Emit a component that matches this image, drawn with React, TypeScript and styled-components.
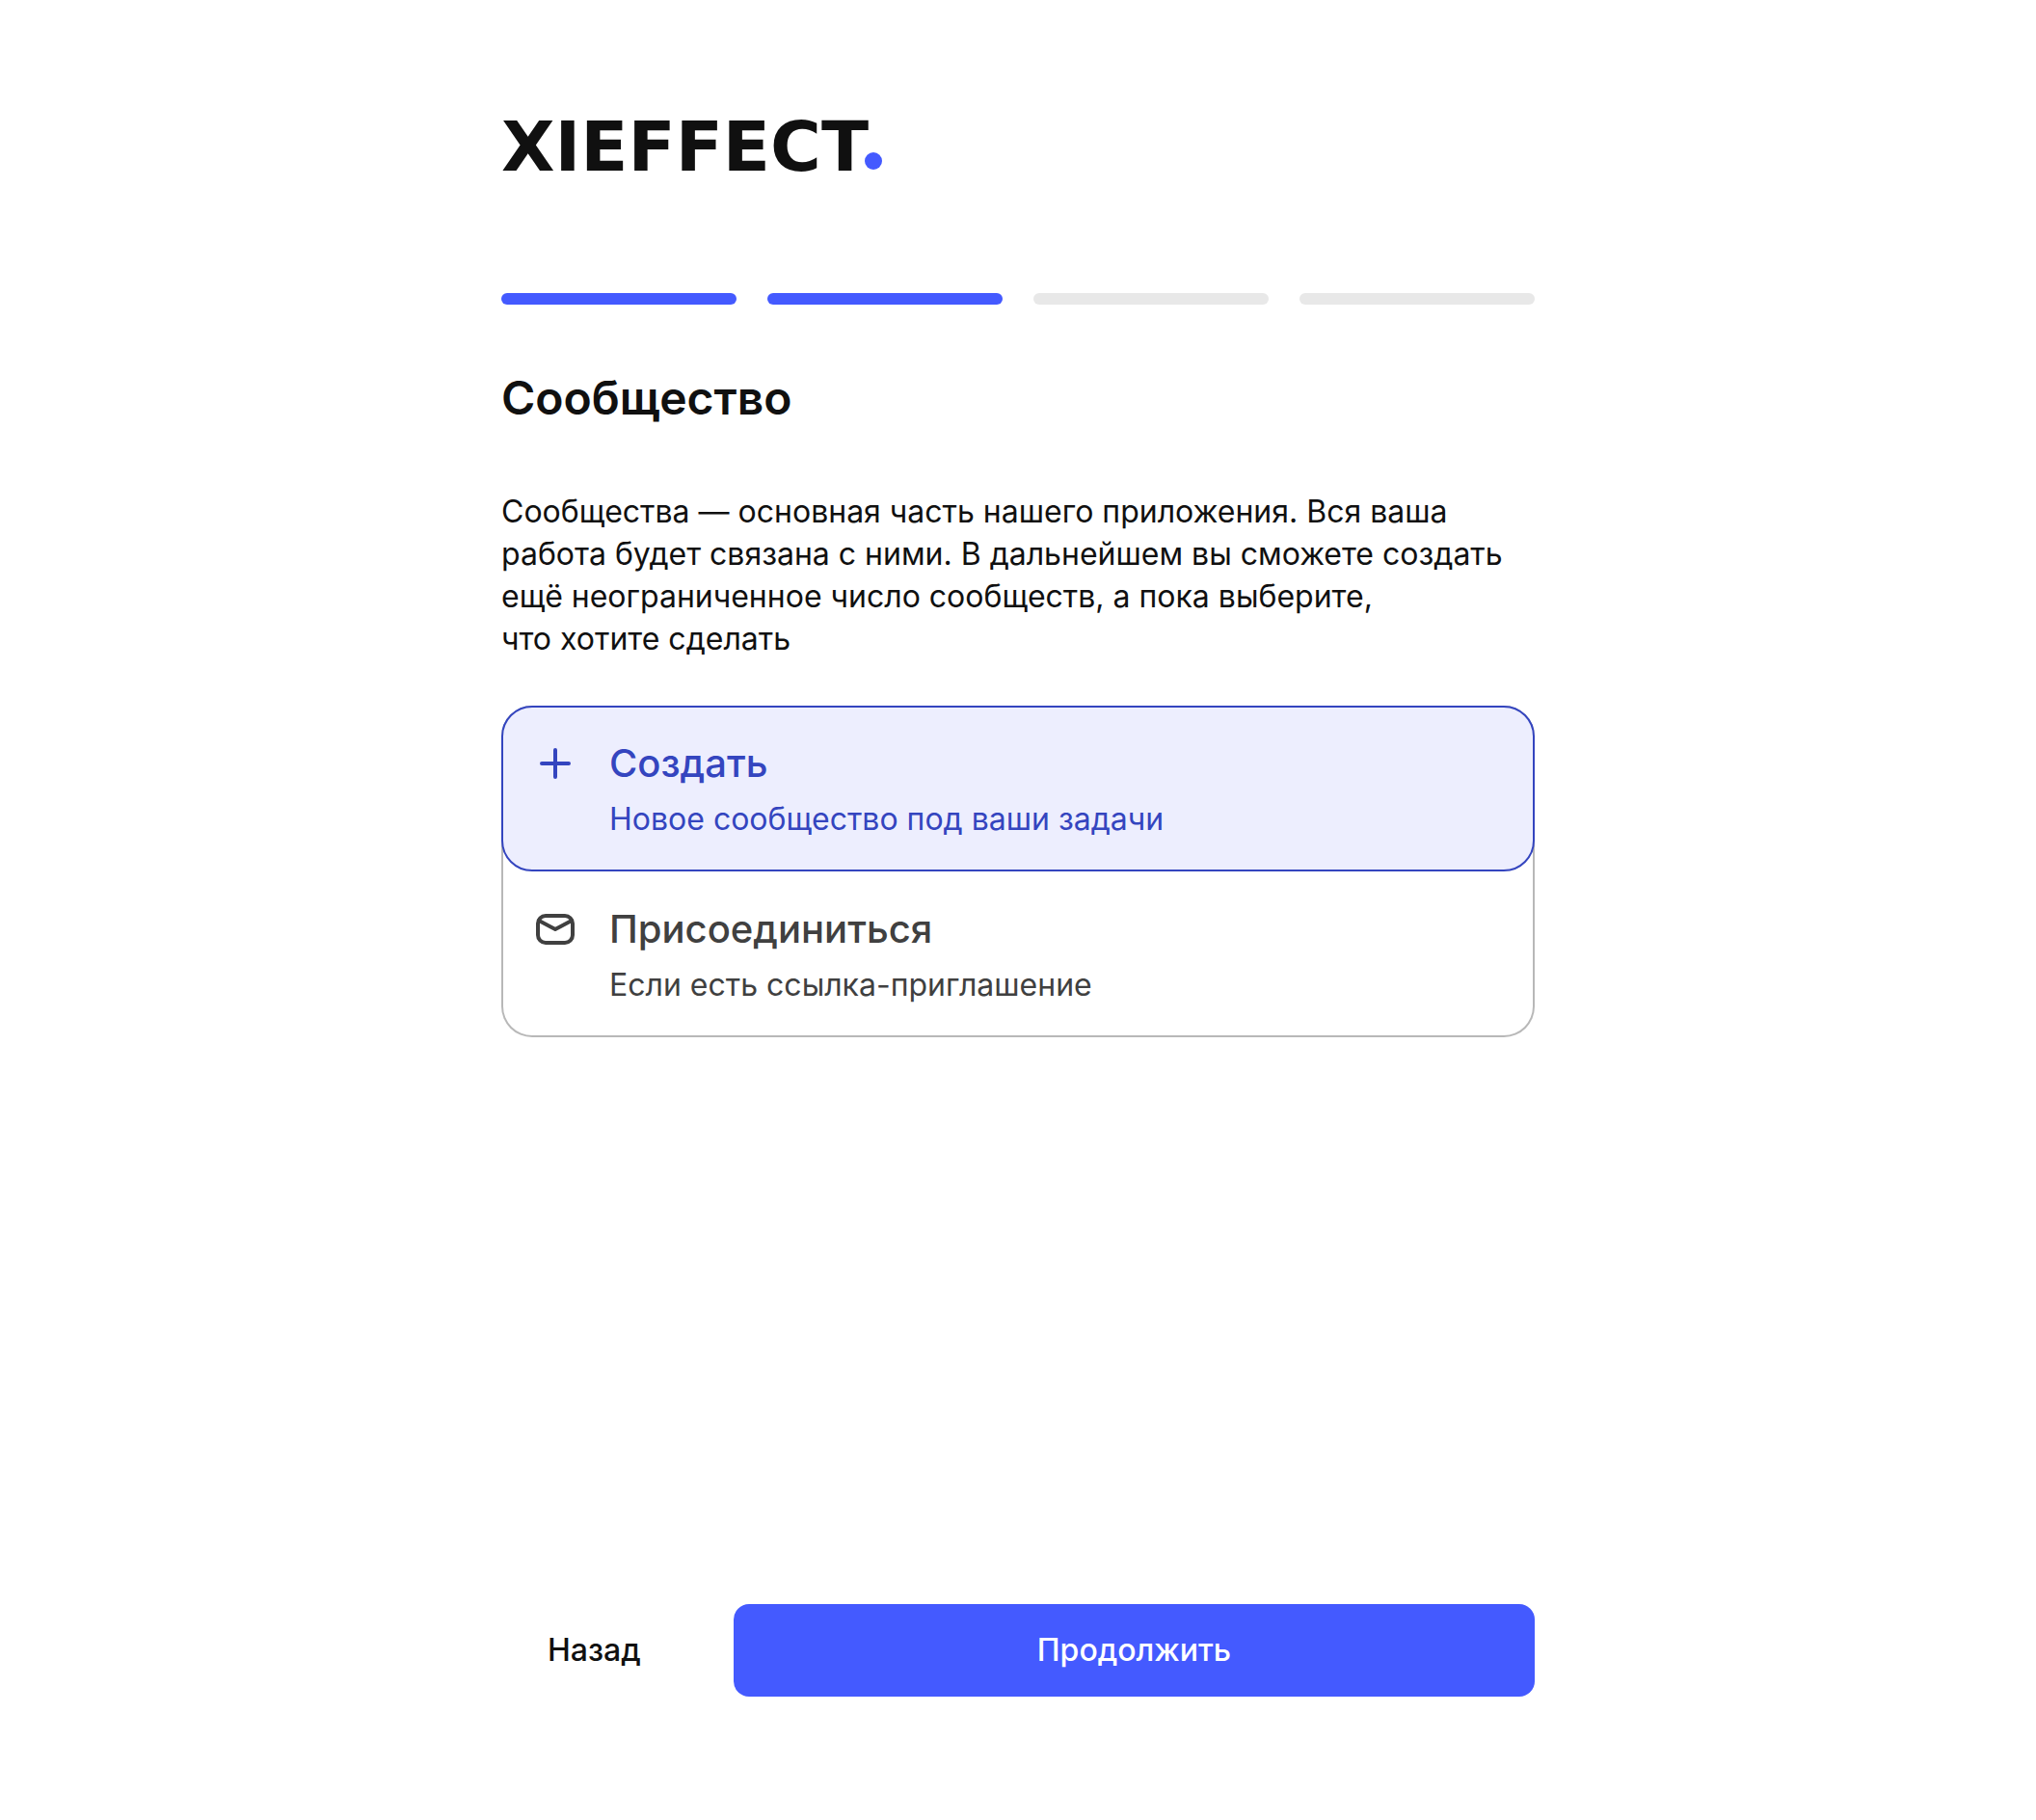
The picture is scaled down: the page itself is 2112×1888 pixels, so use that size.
import React, { useState } from "react";
import styled, { createGlobalStyle } from "styled-components";

const GlobalStyle = createGlobalStyle`
  *, *::before, *::after { box-sizing: border-box; }
  body { margin: 0; background: #ffffff; color: #101010; font-family: Inter, "Noto Sans", sans-serif; }
`;

const Page = styled.form`
  display: flex;
  flex-direction: column;
  width: 100%;
  max-width: 1136px;
  min-height: 100vh;
  margin: 0 auto;
  padding: 128px 32px;
`;

const Logo = styled.div`
  display: flex;
  align-items: flex-end;
  height: 48px;
  font-family: "DejaVu Sans", Inter, sans-serif;
  font-size: 72px;
  font-weight: 700;
  line-height: 48px;
`;

const LogoDot = styled.span`
  flex: none;
  width: 18px;
  height: 18px;
  margin-left: -4px;
  border-radius: 50%;
  background: #445aff;
`;

const Steps = styled.ol`
  display: grid;
  grid-template-columns: repeat(4, 1fr);
  gap: 32px;
  margin: 128px 0 0;
  padding: 0;
  list-style: none;
`;

const Step = styled.li<{ $done: boolean }>`
  height: 12px;
  border-radius: 6px;
  background: ${(p) => (p.$done ? "#445aff" : "#e8e8e8")};
`;

const Title = styled.h1`
  margin: 64px 0 0;
  font-size: 48px;
  font-weight: 600;
  line-height: 66px;
`;

const Intro = styled.p`
  margin: 63px 0 0;
  font-size: 32px;
  line-height: 44px;
`;

const Options = styled.fieldset`
  margin: 47px 0 48px;
  padding: 0;
  border: 0;
  border-radius: 32px;
  box-shadow: inset 0 0 0 2px #b8b8b8;
`;

const Option = styled.label`
  display: grid;
  grid-template-columns: 48px 1fr;
  column-gap: 32px;
  row-gap: 8px;
  align-items: center;
  padding: 30px;
  border: 2px solid transparent;
  border-radius: 32px;
  color: #404040;
  cursor: pointer;

  &:has(input:checked) {
    border-color: #3445bf;
    background: #edeefe;
    color: #3445bf;
  }
`;

const Radio = styled.input`
  position: absolute;
  width: 1px;
  height: 1px;
  margin: 0;
  opacity: 0;
`;

const Icon = styled.svg`
  display: block;
  width: 48px;
  height: 48px;
  fill: none;
  stroke: currentColor;
  stroke-width: 4;
  stroke-linecap: round;
  stroke-linejoin: round;
`;

const OptionTitle = styled.span`
  font-size: 40px;
  font-weight: 500;
  line-height: 56px;
`;

const OptionText = styled.span`
  grid-column: 2;
  font-size: 32px;
  line-height: 44px;
`;

const Actions = styled.div`
  display: flex;
  gap: 48px;
  margin-top: auto;
`;

const Button = styled.button<{ $primary?: boolean }>`
  flex: ${(p) => (p.$primary ? "1" : "none")};
  padding: 26px 48px;
  border: 0;
  border-radius: 16px;
  background: ${(p) => (p.$primary ? "#445aff" : "transparent")};
  color: ${(p) => (p.$primary ? "#ffffff" : "#101010")};
  font: 500 32px/44px Inter, "Noto Sans", sans-serif;
  cursor: pointer;
`;

const PlusIcon = () => (
  <Icon viewBox="0 0 48 48" aria-hidden="true">
    <path d="M24 10v28M10 24h28" />
  </Icon>
);

const MailIcon = () => (
  <Icon viewBox="0 0 48 48" aria-hidden="true">
    <rect x="6" y="10" width="36" height="28" rx="8" />
    <path d="M7 15l17 9 17-9" />
  </Icon>
);

const options = [
  { id: "create", title: "Создать", text: "Новое сообщество под ваши задачи", Glyph: PlusIcon },
  { id: "join", title: "Присоединиться", text: "Если есть ссылка-приглашение", Glyph: MailIcon },
];

export default function App() {
  const [choice, setChoice] = useState("create");
  return (
    <>
      <GlobalStyle />
      <Page onSubmit={(e) => e.preventDefault()}>
        <Logo>
          <span>XIEFFECT</span>
          <LogoDot />
        </Logo>
        <Steps>
          {[1, 2, 3, 4].map((n) => (
            <Step key={n} $done={n <= 2} />
          ))}
        </Steps>
        <Title>Сообщество</Title>
        <Intro>
          Сообщества — основная часть нашего приложения. Вся ваша работа будет связана с ними. В
          дальнейшем вы сможете создать ещё неограниченное число сообществ, а пока выберите,
          <br />
          что хотите сделать
        </Intro>
        <Options>
          {options.map(({ id, title, text, Glyph }) => (
            <Option key={id}>
              <Radio type="radio" name="community" value={id} checked={choice === id} onChange={() => setChoice(id)} />
              <Glyph />
              <OptionTitle>{title}</OptionTitle>
              <OptionText>{text}</OptionText>
            </Option>
          ))}
        </Options>
        <Actions>
          <Button type="button">Назад</Button>
          <Button type="submit" $primary>
            Продолжить
          </Button>
        </Actions>
      </Page>
    </>
  );
}
